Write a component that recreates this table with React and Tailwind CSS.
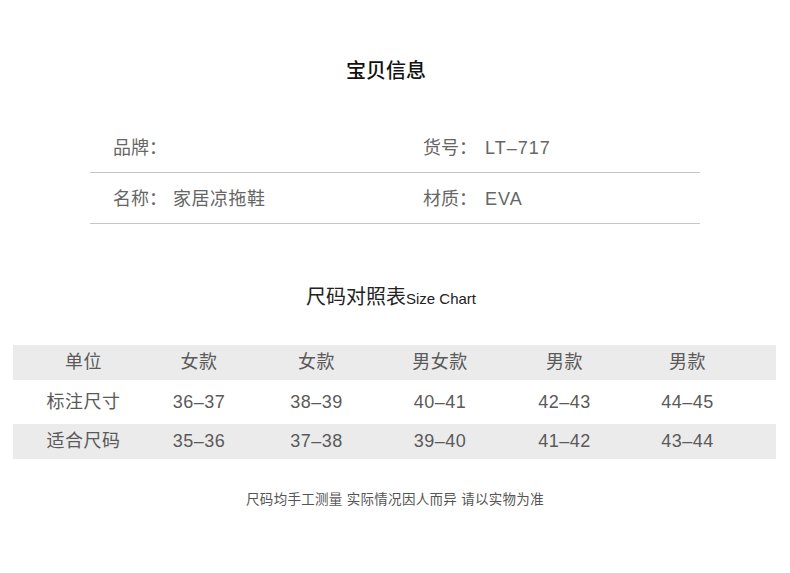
import React from 'react';

const font = { fontFamily: '"Liberation Sans", "Noto Sans CJK SC", sans-serif' };

const cols = ['w-[118px]', 'w-[113px]', 'w-[122px]', 'w-[125px]', 'w-[124px]', 'w-[122px]'];

const rows = [
  { cells: ['单位', '女款', '女款', '男女款', '男款', '男款'], shaded: true, h: 'h-[35px]' },
  { cells: ['标注尺寸', '36–37', '38–39', '40–41', '42–43', '44–45'], shaded: false, h: 'h-[44px]' },
  { cells: ['适合尺码', '35–36', '37–38', '39–40', '41–42', '43–44'], shaded: true, h: 'h-[35px]' },
];

function InfoRow({ label, value, label2, value2 }) {
  return (
    <div className="flex items-center h-[51px] pt-[3px] border-b border-[#c6c6c6] pl-[23px] text-[18px] text-[#666]">
      <div className="w-[310px] flex">
        <span>{label}：</span>
        <span className="ml-[6px] tracking-[0.5px]">{value}</span>
      </div>
      <div className="flex">
        <span>{label2}：</span>
        <span className="ml-[8px] tracking-[1px]">{value2}</span>
      </div>
    </div>
  );
}

export default function App() {
  return (
    <div className="w-[790px] h-[573px] bg-white flex flex-col items-center pt-[59px]" style={font}>
      <h1 className="text-[20px] leading-[24px] font-medium text-[#111] mr-[18px]">宝贝信息</h1>

      <div className="w-[610px] mt-[39px]">
        <InfoRow label="品牌" value="" label2="货号" value2="LT–717" />
        <InfoRow label="名称" value="家居凉拖鞋" label2="材质" value2="EVA" />
      </div>

      <div className="mt-[61px] leading-[24px] text-[#222] flex items-baseline mr-[8px]">
        <span className="text-[20px]">尺码对照表</span>
        <span className="text-[15px]">Size Chart</span>
      </div>

      <div className="w-[763px] mt-[34px] mr-[2px]">
        {rows.map((r, i) => (
          <div key={i} className={`flex items-center pl-[12px] text-[18px] text-[#5a5a5a] ${r.h} ${r.shaded ? 'bg-[#ebebeb]' : 'bg-white'}`}>
            {r.cells.map((c, j) => (
              <div key={j} className={`${cols[j]} text-center tracking-[0.5px]`}>{c}</div>
            ))}
          </div>
        ))}
      </div>

      <p className="mt-[32px] text-[13.5px] leading-[18px] text-[#555] tracking-[0.3px]">
        尺码均手工测量 实际情况因人而异 请以实物为准
      </p>
    </div>
  );
}
